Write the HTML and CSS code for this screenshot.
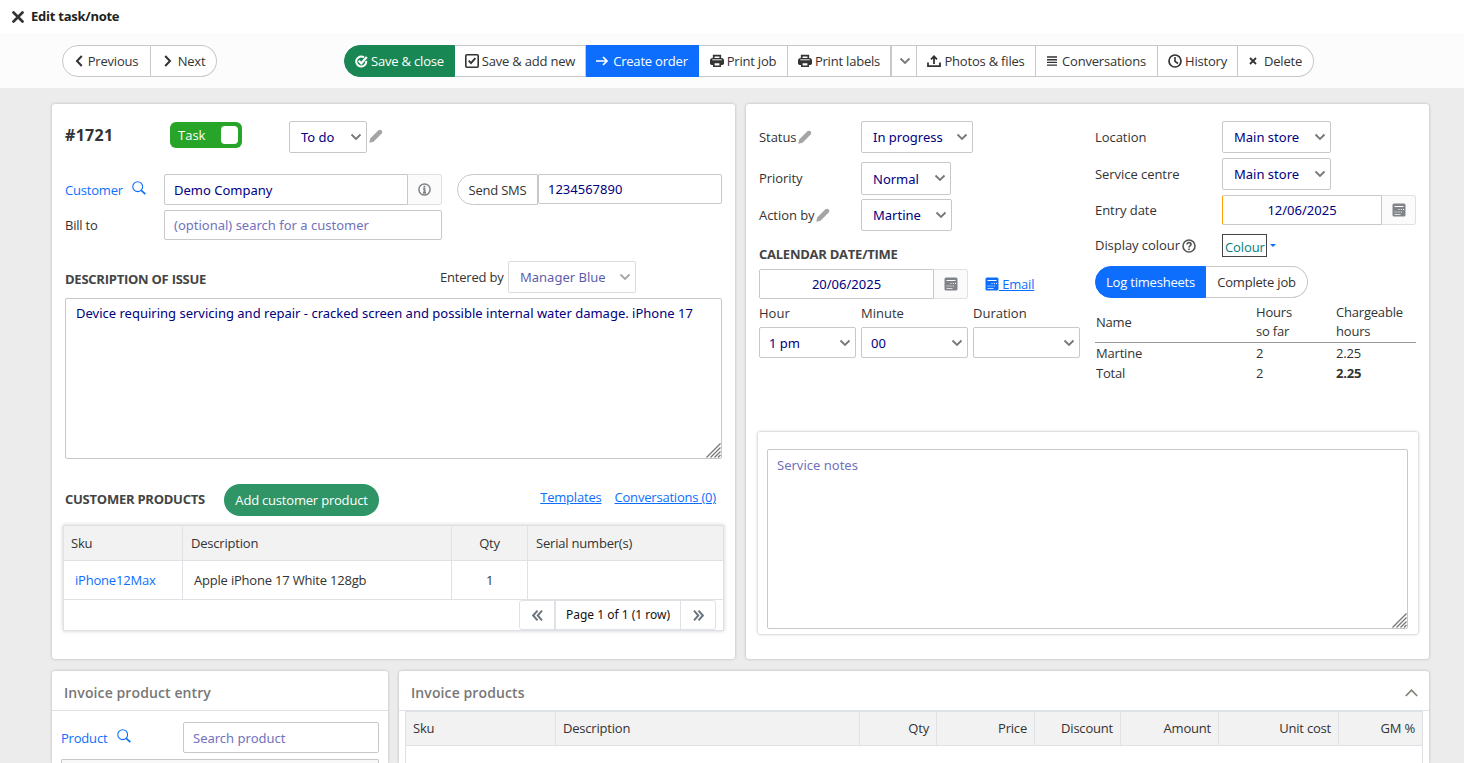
FILE: index.html
```html
<!DOCTYPE html>
<html lang="en">
<head>
    <meta charset="UTF-8">
    <meta name="viewport" content="width=device-width, initial-scale=1.0">
    <title>Edit task/note</title>
    <link rel="stylesheet" href="styles.css">
</head>
<body>
    <!-- Shared icons -->
    <svg class="sprite" xmlns="http://www.w3.org/2000/svg">
        <symbol id="i-down" viewBox="0 0 12 8"><path d="M1.500 1.500 6 6l4.500-4.500" fill="none" stroke="currentColor" stroke-width="1.800"/></symbol>
        <symbol id="i-pencil" viewBox="0 0 14 14"><path d="M.3 13.700 1.200 9.500 9.400 1.300Q11 0 12.700 1.400 14 3 12.700 4.600L4.500 12.800z" fill="#a5a5a5"/></symbol>
        <symbol id="i-search" viewBox="0 0 14 14"><circle cx="5.700" cy="5.700" r="4.900" fill="none" stroke="currentColor" stroke-width="1.100"/><path d="m9.300 9.300 4 3.800" stroke="currentColor" stroke-width="1.700"/></symbol>
        <symbol id="i-print" viewBox="0 0 14 14"><path d="M3.700 5V1.700h6.600V5" fill="none" stroke="currentColor" stroke-width="1.700"/><path d="M2.800 4h8.400Q14 4 14 6.800v2.400q0 1.800-1.800 1.800H1.800Q0 11 0 9.200V6.800Q0 4 2.800 4z" fill="currentColor"/><path d="M2.300 5.800h9.400" stroke="#fff" stroke-width=".9"/><path d="M3.800 8.500h6.400v3.700H3.800z" fill="#fff" stroke="currentColor" stroke-width="1.600"/></symbol>
        <symbol id="i-cal" viewBox="0 0 14 14"><path fill-rule="evenodd" fill="currentColor" d="M2 .5h10q1.500 0 1.500 1.500v10q0 1.500-1.500 1.500H2Q.5 13.500.5 12V2Q.5.500 2 .5zM2.500 3v1h9V3zM6.500 6v1h1V6zm2.300 0v1h1V6zm2.200 0v1h1V6zM2.500 8.500v1h1v-1zm2 0v1h1v-1zm2 0v1h1v-1zm2.300 0v1h1v-1zM2.500 11v.8h6V11z"/></symbol>
        <symbol id="i-grip" viewBox="0 0 15 15"><path d="M.5 14.500l14-14M4.500 14.500l10-10M8.500 14.500l6-6M12 14.500l2.500-2.500" fill="none" stroke="#777" stroke-width="1.300"/></symbol>
    </svg>

    <header class="page-title">
        <svg width="12" height="12" viewBox="0 0 12 12"><path d="m1.500 1.500 9 9m0-9-9 9" stroke="#333" stroke-width="2.700" stroke-linecap="round"/></svg>
        <h1>Edit task/note</h1>
    </header>

    <nav class="toolbar">
        <div class="btn-group nav-group">
            <button class="btn w-prev"><svg width="8" height="12" viewBox="0 0 8 12"><path d="M6.800 1 2 6l4.800 5" fill="none" stroke="currentColor" stroke-width="2"/></svg>Previous</button>
            <button class="btn w-next"><svg width="8" height="12" viewBox="0 0 8 12"><path d="M1.200 1 6 6l-4.800 5" fill="none" stroke="currentColor" stroke-width="2"/></svg>Next</button>
        </div>
        <div class="btn-group main-group">
            <button class="btn tight btn-success w-save"><svg width="13" height="13" viewBox="0 0 13 13"><path d="M11.200 5.800A5 5 0 1 1 9 2.300" fill="none" stroke="currentColor" stroke-width="2"/><path d="m3.700 5.700 2.600 2.600L11.800 2" fill="none" stroke="currentColor" stroke-width="2.200"/></svg>Save &amp; close</button>
            <button class="btn tight w-add"><svg width="14" height="14" viewBox="0 0 14 14"><rect x=".8" y=".8" width="12.400" height="12.400" rx="1" fill="none" stroke="currentColor" stroke-width="1.600"/><path d="M3.700 6.700 6 9.200l4.400-5" fill="none" stroke="currentColor" stroke-width="1.900"/></svg>Save &amp; add new</button>
            <button class="btn btn-primary w-order"><svg width="12" height="10" viewBox="0 0 12 10"><path d="M0 5h11M7 1l4 4-4 4" fill="none" stroke="currentColor" stroke-width="1.700"/></svg>Create order</button>
            <button class="btn tight w-job"><svg width="14" height="14"><use href="#i-print"/></svg>Print job</button>
            <button class="btn tight w-labels"><svg width="14" height="14"><use href="#i-print"/></svg>Print labels</button>
            <button class="btn w-more"><svg class="muted" width="12" height="8"><use href="#i-down"/></svg></button>
            <button class="btn w-photos"><svg width="14" height="12" viewBox="0 0 14 12"><path d="M1 7.500v3.600h12V7.500M7 9V1.500M4 4.300l3-3 3 3" fill="none" stroke="currentColor" stroke-width="1.800"/></svg>Photos &amp; files</button>
            <button class="btn wide w-conv"><svg width="10" height="10" viewBox="0 0 10 10"><path d="M0 1h10M0 3.700h10M0 6.400h10M0 9.100h10" stroke="currentColor" stroke-width="1.400"/></svg>Conversations</button>
            <button class="btn tight w-history"><svg width="14" height="14" viewBox="0 0 14 14"><circle cx="7" cy="7" r="6" fill="none" stroke="currentColor" stroke-width="1.700"/><path d="M7 3v4.300l3 2.200" fill="none" stroke="currentColor" stroke-width="1.600"/></svg>History</button>
            <button class="btn wide w-delete"><svg width="8" height="8" viewBox="0 0 8 8"><path d="m1 1 6 6m0-6L1 7" stroke="currentColor" stroke-width="1.800"/></svg>Delete</button>
        </div>
    </nav>

    <main>
        <div class="row top-row">
            <section class="card task-card">
                <div class="task-head">
                    <h2>#1721</h2>
                    <div class="toggle">Task<span class="knob"></span></div>
                    <div class="select s-todo"><select><option>To do</option></select><svg><use href="#i-down"/></svg></div>
                    <svg class="pencil" width="14" height="14"><use href="#i-pencil"/></svg>
                </div>
                <div class="field customer-row">
                    <label class="link">Customer <svg width="14" height="14"><use href="#i-search"/></svg></label>
                    <div class="input-group customer">
                        <input type="text" value="Demo Company">
                        <button class="addon"><svg width="13" height="13" viewBox="0 0 13 13"><circle cx="6.500" cy="6.500" r="5.600" fill="none" stroke="currentColor" stroke-width="1.500"/><path d="M6.500 2.800v1.600M6.500 5.300v4.700M5.200 5.700h1.500M5 9.700h3" stroke="currentColor" stroke-width="1.900"/></svg></button>
                    </div>
                    <button class="btn sms">Send SMS</button>
                    <input class="phone" type="text" value="1234567890">
                </div>
                <div class="field bill-row">
                    <label>Bill to</label>
                    <input class="bill" type="text" placeholder="(optional) search for a customer">
                </div>
                <div class="issue-head">
                    <h3>DESCRIPTION OF ISSUE</h3>
                    <span>Entered by</span>
                    <div class="select disabled s-manager"><select><option>Manager Blue</option></select><svg><use href="#i-down"/></svg></div>
                </div>
                <div class="area issue-area">
                    <textarea>Device requiring servicing and repair - cracked screen and possible internal water damage. iPhone 17</textarea>
                    <svg class="grip"><use href="#i-grip"/></svg>
                </div>
                <div class="products-head">
                    <h3>CUSTOMER PRODUCTS</h3>
                    <button class="btn-add">Add customer product</button>
                    <div class="links"><a href="#">Templates</a><a href="#">Conversations (0)</a></div>
                </div>
                <div class="grid-box">
                    <table class="products">
                        <colgroup><col class="c-sku"><col class="c-desc"><col class="c-qty"><col></colgroup>
                        <tr><th>Sku</th><th>Description</th><th class="center">Qty</th><th>Serial number(s)</th></tr>
                        <tr><td><a href="#">iPhone12Max</a></td><td>Apple iPhone 17 White 128gb</td><td class="center">1</td><td></td></tr>
                    </table>
                    <div class="pager">
                        <button><svg width="11" height="11" viewBox="0 0 11 11"><path d="M5.500.7 1.200 5.500l4.300 4.800M10 .7 5.700 5.500l4.300 4.800" fill="none" stroke="#6c757d" stroke-width="2"/></svg></button>
                        <span>Page 1 of 1 (1 row)</span>
                        <button><svg width="11" height="11" viewBox="0 0 11 11"><path d="m1 .7 4.300 4.800L1 10.300M5.500.7l4.300 4.800-4.300 4.800" fill="none" stroke="#6c757d" stroke-width="2"/></svg></button>
                    </div>
                </div>
            </section>

            <section class="card status-card">
                <div class="status-cols">
                    <div class="status-left">
                        <div class="line h-status"><label>Status <svg class="pencil" width="14" height="14"><use href="#i-pencil"/></svg></label>
                            <div class="select s-progress"><select><option>In progress</option></select><svg><use href="#i-down"/></svg></div></div>
                        <div class="line h-priority"><label>Priority</label>
                            <div class="select s-normal"><select><option>Normal</option></select><svg><use href="#i-down"/></svg></div></div>
                        <div class="line"><label>Action by <svg class="pencil" width="14" height="14"><use href="#i-pencil"/></svg></label>
                            <div class="select s-martine"><select><option>Martine</option></select><svg><use href="#i-down"/></svg></div></div>
                        <h3>CALENDAR DATE/TIME</h3>
                        <div class="date-row">
                            <div class="input-group date-cal">
                                <input type="text" value="20/06/2025">
                                <button class="addon"><svg width="14" height="14"><use href="#i-cal"/></svg></button>
                            </div>
                            <a class="email" href="#"><svg width="14" height="14"><use href="#i-cal"/></svg>&nbsp;Email</a>
                        </div>
                        <div class="time-row">
                            <div class="t-hour"><label>Hour</label><div class="select"><select><option>1 pm</option></select><svg><use href="#i-down"/></svg></div></div>
                            <div class="t-minute"><label>Minute</label><div class="select"><select><option>00</option></select><svg><use href="#i-down"/></svg></div></div>
                            <div class="t-minute"><label>Duration</label><div class="select"><select><option></option></select><svg><use href="#i-down"/></svg></div></div>
                        </div>
                    </div>
                    <div class="status-right">
                        <div class="line"><label>Location</label>
                            <div class="select s-store"><select><option>Main store</option></select><svg><use href="#i-down"/></svg></div></div>
                        <div class="line"><label>Service centre</label>
                            <div class="select s-store"><select><option>Main store</option></select><svg><use href="#i-down"/></svg></div></div>
                        <div class="line h-entry"><label>Entry date</label>
                            <div class="input-group date-entry">
                                <input type="text" value="12/06/2025">
                                <button class="addon"><svg width="14" height="14"><use href="#i-cal"/></svg></button>
                            </div></div>
                        <div class="line h-colour"><label>Display colour <svg width="14" height="14" viewBox="0 0 14 14"><circle cx="7" cy="7" r="6" fill="none" stroke="#555" stroke-width="1.600"/><path d="M5 5.500C5 3 9 3.200 9 5.400 9 6.900 7 6.800 7 8.400M7 9.400v1.600" fill="none" stroke="#555" stroke-width="1.700"/></svg></label>
                            <span class="colour">Colour</span><i class="caret"></i></div>
                        <div class="btn-group job-group">
                            <button class="btn btn-primary w-log">Log timesheets</button>
                            <button class="btn w-complete">Complete job</button>
                        </div>
                        <table class="hours">
                            <thead><tr><th class="c-name">Name</th><th class="c-hours">Hours<br>so far</th><th>Chargeable<br>hours</th></tr></thead>
                            <tbody>
                                <tr><td>Martine</td><td>2</td><td>2.25</td></tr>
                                <tr><td>Total</td><td>2</td><td><b>2.25</b></td></tr>
                            </tbody>
                        </table>
                    </div>
                </div>
                <div class="notes">
                    <div class="area">
                        <textarea placeholder="Service notes"></textarea>
                        <svg class="grip"><use href="#i-grip"/></svg>
                    </div>
                </div>
            </section>
        </div>

        <div class="row bottom-row">
            <section class="card entry-card">
                <h4>Invoice product entry</h4>
                <div class="entry-body">
                    <div class="field">
                        <label class="link">Product <svg width="14" height="14"><use href="#i-search"/></svg></label>
                        <input type="text" placeholder="Search product">
                    </div>
                    <div class="entry-box"></div>
                </div>
            </section>
            <section class="card invoice-card">
                <h4>Invoice products <svg width="13" height="8" viewBox="0 0 13 8"><path d="M.8 7 6.500 1.200 12.200 7" fill="none" stroke="#828277" stroke-width="1.700"/></svg></h4>
                <table class="invoice">
                    <colgroup><col class="i-sku"><col class="i-desc"><col class="i-qty"><col class="i-price"><col class="i-disc"><col class="i-amount"><col class="i-cost"><col></colgroup>
                    <tr><th>Sku</th><th>Description</th><th class="right">Qty</th><th class="right">Price</th><th class="right">Discount</th><th class="right">Amount</th><th class="right">Unit cost</th><th class="right">GM %</th></tr>
                    <tr><td colspan="8"></td></tr>
                </table>
            </section>
        </div>
    </main>
</body>
</html>
```

FILE: styles.css
```css
:root {
    --blue: #0d6efd;
    --green: #198754;
    --text: #333;
    --navy: #000080;
    --placeholder: #7272bd;
    --border: #c8c8c8;
    --line: #dee2e6;
}
* {
    box-sizing: border-box;
}
body {
    margin: 0;
    background-color: #ececec;
    color: var(--text);
    font: 13px/18px "Open Sans", sans-serif;
    letter-spacing: -0.2px;
}
h1, h2, h3, h4 {
    margin: 0;
}
a {
    color: var(--blue);
}
svg {
    flex: none;
}
.sprite {
    display: none;
}
input, select, textarea {
    font: 13px/18px "Noto Sans", sans-serif;
    letter-spacing: 0;
    color: var(--navy);
    background: #fff;
    border: 1px solid var(--border);
    border-radius: 2px;
    outline: none;
    margin: 0;
}
input {
    height: 31px;
    padding: 0 9px;
}
input::placeholder, textarea::placeholder {
    color: var(--placeholder);
}
button {
    letter-spacing: inherit;
}

/* Header */
.page-title {
    height: 33px;
    background: #fff;
    display: flex;
    align-items: center;
    gap: 7px;
    padding-left: 12px;
}
.page-title h1 {
    margin-top: -1px;
    font-size: 13px;
    line-height: 17px;
    letter-spacing: -0.25px;
    color: #222;
}
.toolbar {
    height: 55px;
    background: #fcfcfc;
    display: flex;
    padding: 12px 0 0 62px;
}
.btn-group {
    display: flex;
    height: 32px;
}
.main-group {
    margin-left: 127px;
}
.btn {
    display: flex;
    align-items: center;
    justify-content: center;
    gap: 5px;
    flex: none;
    padding: 0;
    background: #fff;
    border: 1px solid var(--border);
    border-left-width: 0;
    color: var(--text);
    font: 13px/18px "Open Sans", sans-serif;
    white-space: nowrap;
}
.btn.tight {
    gap: 3px;
}
.btn.wide {
    gap: 6px;
}
.btn:first-child {
    border-left-width: 1px;
    border-radius: 16px 0 0 16px;
}
.btn:last-child {
    border-radius: 0 16px 16px 0;
}
.btn-primary {
    background: var(--blue);
    border-color: var(--blue);
    color: #fff;
}
.btn-success {
    background: var(--green);
    border-color: var(--green);
    color: #fff;
}
.muted {
    color: #777;
}
.w-prev { width: 89px; }
.btn.w-next { width: 66px; gap: 6px; padding-left: 2px; }
.w-save { width: 111px; }
.w-add { width: 131px; }
.w-order { width: 113px; }
.w-job { width: 89px; }
.w-labels { width: 104px; border-right-width: 2px; }
.w-more { width: 25px; padding-left: 2px; }
.w-photos { width: 119px; gap: 3px; }
.btn.w-conv { width: 122px; gap: 5px; }
.w-history { width: 80px; }
.btn.w-delete { width: 76px; gap: 7px; }

/* Cards */
main {
    height: 675px;
    padding: 16px 0 0 52px;
}
.row {
    display: flex;
    gap: 11px;
}
.bottom-row {
    margin-top: 12px;
}
.card {
    background: #fff;
    border-radius: 3px;
    box-shadow: 0 0 3px rgba(0, 0, 30, 0.25);
}
.task-card, .status-card {
    width: 683px;
    height: 555px;
}
.task-card {
    padding: 17px 13px 0;
}
h3 {
    font-size: 13px;
    line-height: 18px;
    letter-spacing: -0.25px;
    color: #444;
}

/* Selects */
.select {
    position: relative;
    height: 32px;
    flex: none;
}
.select select {
    width: 100%;
    height: 100%;
    padding: 0 11px;
    appearance: none;
}
.select svg {
    position: absolute;
    right: 5px;
    top: 12px;
    width: 12px;
    height: 8px;
    color: #777;
    pointer-events: none;
}
.select.disabled {
    opacity: 0.65;
}
.s-todo { width: 78px; }
.s-manager { width: 128px; }
.s-progress { width: 112px; }
.s-normal { width: 90px; height: 33px; }
.s-martine { width: 91px; }
.s-store { width: 109px; }

/* Task card */
.task-head {
    display: flex;
    height: 32px;
}
.task-head h2 {
    width: 105px;
    font-size: 16px;
    line-height: 28px;
    letter-spacing: 0.3px;
}
.toggle {
    display: flex;
    align-items: center;
    justify-content: space-between;
    width: 72px;
    height: 26px;
    margin: 1px 47px 0 0;
    padding: 0 4px 0 8px;
    border-radius: 6px;
    background: #28a428;
    color: #fff;
    font-weight: 500;
    line-height: 26px;
    letter-spacing: 0;
}
.knob {
    width: 17px;
    height: 18px;
    border-radius: 4px;
    background: #fff;
}
.task-head .pencil {
    margin: 8px 0 0 2px;
}
.field {
    display: flex;
}
.field label {
    width: 99px;
    line-height: 32px;
    flex: none;
}
.link {
    color: var(--blue);
}
.link svg {
    margin-left: 6px;
}
.customer-row {
    margin-top: 21px;
}
.bill-row {
    margin-top: 5px;
    height: 30px;
}
.bill {
    width: 278px;
    height: 30px;
}
.bill-row label {
    line-height: 30px;
}
.input-group {
    display: flex;
    height: 31px;
}
.input-group input {
    flex: 1;
    min-width: 0;
    height: 100%;
    border-radius: 2px 0 0 2px;
}
.addon {
    width: 34px;
    padding: 0;
    display: flex;
    align-items: center;
    justify-content: center;
    background: #fbfbfb;
    border: 1px solid var(--line);
    border-left: 0;
    border-radius: 0 3px 3px 0;
    color: #808488;
}
.customer {
    width: 278px;
}
.customer-row {
    height: 31px;
}
.btn.sms {
    width: 81px;
    height: 31px;
    margin-left: 15px;
    border-width: 1px;
    border-radius: 16px 0 0 16px;
}
.phone {
    width: 184px;
    height: 30px;
}
.issue-head {
    display: flex;
    align-items: center;
    margin-top: 21px;
}
.issue-head h3 {
    width: 375px;
    padding-top: 4px;
}
.issue-head span {
    width: 68px;
}
.area {
    position: relative;
}
.area textarea {
    display: block;
    width: 100%;
    height: 100%;
    padding: 6px 9px;
    resize: none;
}
.grip {
    position: absolute;
    right: 1px;
    bottom: 1px;
    width: 15px;
    height: 15px;
}
.issue-area {
    height: 161px;
    margin-top: 5px;
}
.issue-area textarea {
    padding: 5px 10px;
}
.products-head {
    display: flex;
    align-items: center;
    height: 32px;
    margin-top: 25px;
}
.products-head h3 {
    width: 159px;
    margin-top: -2px;
}
.btn-add {
    width: 155px;
    height: 32px;
    padding: 0;
    border: 0;
    border-radius: 16px;
    background: #309566;
    color: #fff;
    font: 13px/18px "Open Sans", sans-serif;
}
.links {
    margin: -6px 6px 0 auto;
    display: flex;
    gap: 13px;
}
.grid-box {
    margin: 9px -2px 0;
    height: 106px;
    border: 1px solid var(--line);
    box-shadow: 0 0 4px rgba(0, 0, 0, 0.2);
}
table {
    border-collapse: collapse;
    table-layout: fixed;
    width: 100%;
}
th {
    font-weight: normal;
    text-align: left;
}
.products {
    border-collapse: separate;
    border-spacing: 0;
}
.products th, .products td {
    border-right: 1px solid var(--line);
    border-bottom: 1px solid var(--line);
}
.products th {
    height: 35px;
    padding: 0 8px 0 7px;
    background: #f2f2f2;
}
.products th + th {
    padding-left: 8px;
}
.products td {
    height: 39px;
    padding: 0 11px;
}
.products th:last-child, .products td:last-child {
    border-right: 0;
}
.products td a {
    text-decoration: none;
}
.products .center {
    text-align: center;
}
.c-sku { width: 119px; }
.c-desc { width: 269px; }
.c-qty { width: 76px; }
.pager {
    display: flex;
    width: 197px;
    height: 30px;
    margin: 0 7px 0 auto;
    border: 1px solid var(--line);
    border-radius: 3px;
    font: 12px/28px "Noto Sans", sans-serif;
    letter-spacing: 0;
    color: #111;
}
.pager button {
    width: 34px;
    padding: 0;
    border: 0;
    background: transparent;
}
.pager svg {
    vertical-align: middle;
}
.pager span {
    flex: 1;
    text-align: center;
    border: solid var(--line);
    border-width: 0 1px 0 2px;
}

/* Status card */
.status-card {
    padding: 17px 11px 0 12px;
}
.status-cols {
    display: flex;
    height: 311px;
}
.status-left {
    width: 336px;
    padding-left: 1px;
}
.status-right {
    width: 321px;
    margin-left: 1px;
}
.line {
    display: flex;
    height: 37px;
}
.line label {
    line-height: 32px;
    letter-spacing: -0.05px;
    flex: none;
}
.line label svg {
    vertical-align: -2px;
    margin-left: -2px;
}
.h-colour label svg {
    margin-left: -1px;
    vertical-align: -3px;
}
.status-left .line label {
    width: 102px;
}
.status-right .line label {
    width: 127px;
}
.h-status {
    height: 41px;
}
.status-left h3 {
    margin-top: 9px;
}
.date-row {
    display: flex;
    align-items: center;
    margin-top: 6px;
}
.date-cal {
    width: 209px;
    height: 30px;
}
.date-cal input, .date-entry input {
    text-align: center;
}
.email {
    display: flex;
    align-items: center;
    margin-left: 17px;
}
.time-row {
    display: flex;
    gap: 5px;
    margin-top: 5px;
    width: 321px;
    letter-spacing: 0;
}
.time-row label {
    display: block;
    height: 23px;
}
.time-row .select {
    height: 31px;
}
.time-row select {
    padding: 0 9px;
}
.t-hour { width: 97px; }
.t-minute { width: 107px; }
.date-entry {
    width: 194px;
    height: 30px;
}
.date-entry input {
    border-left-color: #ffa000;
}
.h-entry label {
    line-height: 30px;
}
.h-colour {
    height: 34px;
}
.h-colour label {
    line-height: 26px;
}
.colour {
    height: 23px;
    margin-top: 2px;
    width: 45px;
    padding: 0 2px;
    border: 1px solid #444;
    line-height: 24px;
    letter-spacing: -0.1px;
    color: #008080;
}
.caret {
    height: 3px;
    margin: 12px 0 0 3px;
    border: 3px solid transparent;
    border-top-color: var(--blue);
    border-bottom: 0;
}
.w-log { width: 111px; }
.w-complete { width: 102px; }
.hours {
    margin-top: 5px;
}
.hours th {
    height: 39px;
    padding: 0 0 1px 1px;
    line-height: 19px;
    border-bottom: 1px solid #999;
}
.hours td {
    height: 20px;
    padding: 0 0 0 1px;
}
.c-name { width: 160px; }
.c-hours { width: 80px; }
.notes {
    width: 660px;
    height: 202px;
    padding: 17px 10px 5px 9px;
    border-radius: 2px;
    box-shadow: 0 0 3px rgba(0, 0, 0, 0.35);
}
.notes .area {
    height: 180px;
}

/* Invoice */
h4 {
    display: flex;
    align-items: center;
    justify-content: space-between;
    height: 40px;
    padding: 4px 11px 0 12px;
    border-bottom: 1px solid var(--line);
    font-size: 14px;
    font-weight: 600;
    letter-spacing: 0.1px;
    color: #777;
}
.entry-card, .invoice-card {
    height: 92px;
    border-radius: 3px 3px 0 0;
    overflow: hidden;
}
.entry-card {
    width: 336px;
}
.invoice-card {
    width: 1030px;
}
.entry-body {
    padding: 11px 9px 0;
}
.entry-body label {
    width: 122px;
}
.entry-body input {
    width: 196px;
}
.entry-box {
    height: 5px;
    margin-top: 5px;
    border: 1px solid var(--border);
    border-bottom: 0;
    border-radius: 2px 2px 0 0;
    background: #f8f8f8;
}
.invoice {
    width: 1018px;
    margin-left: 6px;
}
.invoice th, .invoice td {
    border: 1px solid var(--line);
    padding: 0 7px;
}
.invoice th {
    height: 34px;
    padding-bottom: 1px;
    background: #f2f2f2;
}
.invoice td {
    height: 17px;
    border-bottom: 0;
}
.invoice .right {
    text-align: right;
}
.i-sku { width: 150px; }
.i-desc { width: 304px; }
.i-qty { width: 77px; }
.i-price { width: 98px; }
.i-disc { width: 86px; }
.i-amount { width: 98px; }
.i-cost { width: 120px; }
```
